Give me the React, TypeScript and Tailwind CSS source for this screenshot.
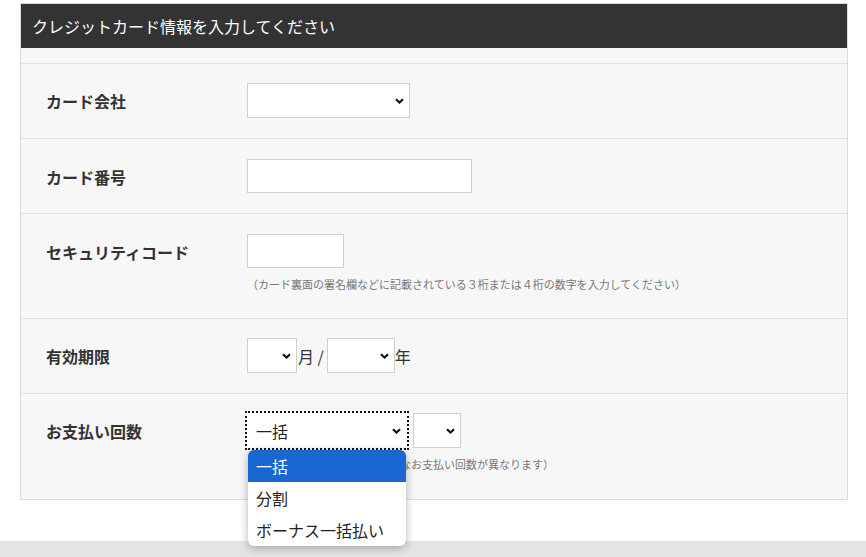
import { ReactNode } from "react";

function Chevron() {
    return (
        <svg className="pointer-events-none absolute right-[6px] top-1/2 -translate-y-1/2" width="9" height="6" viewBox="0 0 9 6">
            <path d="M1 1.2l3.5 3.3L8 1.2" fill="none" stroke="#111" strokeWidth="2.2" />
        </svg>
    );
}

interface SelectBoxProps {
    width: string;
    value?: string;
    focused?: boolean;
}

function SelectBox({ width, value, focused }: SelectBoxProps) {
    return (
        <div className={`relative h-[35px] ${width}`}>
            <div
                className={`h-full w-full bg-white flex items-center pl-[8px] text-[16px] text-[#222] border ${
                    focused ? "border-white outline-2 outline-dotted outline-[#111]" : "border-[#cfcfcf]"
                }`}
            >
                {value}
            </div>
            <Chevron />
        </div>
    );
}

interface RowProps {
    label: string;
    top: string;
    bottom: string;
    children: ReactNode;
}

function Row({ label, top, bottom, children }: RowProps) {
    return (
        <div className={`flex border-t border-[#e2e2e2] pl-[25px] ${top} ${bottom}`}>
            <div className="w-[201px] h-[35px] flex items-center font-bold text-[16px] text-[#333]">{label}</div>
            <div className="flex-1">{children}</div>
        </div>
    );
}

function Note({ children }: { children: ReactNode }) {
    return <div className="mt-[8px] leading-[16px] text-[11px] text-[#777]">{children}</div>;
}

const payOptions = ["一括", "分割", "ボーナス一括払い"];

export default function App() {
    return (
        <div className="min-h-[557px] bg-white font-['Noto_Sans_CJK_JP','Noto_Sans',sans-serif]">
            <div className="pt-[3px] pl-[20px]">
                <div className="w-[828px] border border-[#dcdcdc] bg-[#f7f7f7]">
                    <div className="h-[44px] bg-[#333333] text-white text-[16px] flex items-center pl-[11px]">
                        クレジットカード情報を入力してください
                    </div>
                    <div className="h-[15px]" />

                    <Row label="カード会社" top="pt-[19px]" bottom="pb-[20px]">
                        <SelectBox width="w-[163px]" />
                    </Row>

                    <Row label="カード番号" top="pt-[20px]" bottom="pb-[19px]">
                        <input className="block h-[34px] w-[225px] bg-white border border-[#cfcfcf]" />
                    </Row>

                    <Row label="セキュリティコード" top="pt-[20px]" bottom="pb-[26px]">
                        <input className="block h-[34px] w-[97px] bg-white border border-[#cfcfcf]" />
                        <Note>（カード裏面の署名欄などに記載されている３桁または４桁の数字を入力してください）</Note>
                    </Row>

                    <Row label="有効期限" top="pt-[19px]" bottom="pb-[20px]">
                        <div className="flex items-center text-[16px] text-[#333]">
                            <SelectBox width="w-[50px]" />
                            <span className="ml-[1px] mr-[3px]">月 /</span>
                            <SelectBox width="w-[68px]" />
                            <span>年</span>
                        </div>
                    </Row>

                    <Row label="お支払い回数" top="pt-[19px]" bottom="pb-[27px]">
                        <div className="flex">
                            <div className="relative">
                                <SelectBox width="w-[160px]" value="一括" focused />
                                <ul className="absolute z-10 top-[37px] left-[1px] w-[158px] rounded-[6px] bg-white shadow-[0_2px_8px_rgba(0,0,0,0.3)] overflow-hidden text-[16px] text-[#222]">
                                    {payOptions.map((opt, i) => (
                                        <li
                                            key={opt}
                                            className={`h-[32px] flex items-center pl-[8px] ${i == 0 ? "bg-[#1a67d2] text-white" : ""}`}
                                        >
                                            {opt}
                                        </li>
                                    ))}
                                </ul>
                            </div>
                            <div className="ml-[6px]">
                                <SelectBox width="w-[48px]" />
                            </div>
                        </div>
                        <Note>（カード会社によって選択可能なお支払い回数が異なります）</Note>
                    </Row>
                </div>
            </div>
            <div className="h-[41px]" />
            <div className="h-[16px] bg-[#e4e4e4]" />
        </div>
    );
}
